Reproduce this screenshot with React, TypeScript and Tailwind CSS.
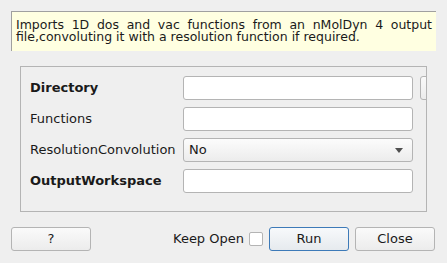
const font = { fontFamily: '"DejaVu Sans", "Liberation Sans", sans-serif' };

function Row({ label, bold, children }: { label: string; bold?: boolean; children: React.ReactNode }) {
  return (
    <div className="flex items-center h-[24px] shrink-0">
      <span className={`w-[153px] shrink-0 text-[13px] text-[#1a1a1a] ${bold ? 'font-bold' : ''}`}>{label}</span>
      {children}
    </div>
  );
}

function TextInput() {
  return <div className="w-[230px] h-[24px] shrink-0 bg-white border border-[#b4b4b4] rounded-[3px]" />;
}

export default function App() {
  return (
    <div style={font} className="w-[447px] h-[263px] bg-[#efefef] flex flex-col overflow-hidden">
      {/* Description */}
      <div className="mt-[11px] ml-[11px] w-[425px] h-[40px] bg-[#ffffe1] border-t border-l border-[#a0a0a0] px-[4px] pt-[7px] text-[12.5px] leading-[12px] text-[#1a1a1a] text-justify [text-align-last:left]">
        Imports 1D dos and vac functions from an nMolDyn 4 output file,convoluting it with a resolution function if required.
      </div>

      {/* Properties group */}
      <div className="mt-[15px] ml-[20px] w-[407px] h-[146px] border border-[#b4b4b4] overflow-hidden pl-[9px] pt-[9px] flex flex-col gap-[7px]">
        <Row label="Directory" bold>
          <TextInput />
          <div className="ml-[7px] w-[20px] h-[24px] shrink-0 bg-gradient-to-b from-[#fafafa] to-[#ececec] border border-[#b4b4b4] rounded-[3px]" />
        </Row>
        <Row label="Functions">
          <TextInput />
        </Row>
        <Row label="ResolutionConvolution">
          <div className="w-[230px] h-[24px] shrink-0 border border-[#b4b4b4] rounded-[3px] bg-gradient-to-b from-[#fcfcfc] to-[#ececec] flex items-center justify-between pl-[5px] pr-[9px] text-[13px] text-[#1a1a1a]">
            <span>No</span>
            <svg width="8" height="5" viewBox="0 0 8 5">
              <path d="M0 0 H8 L4 5 Z" fill="#505050" />
            </svg>
          </div>
        </Row>
        <Row label="OutputWorkspace" bold>
          <TextInput />
        </Row>
      </div>

      {/* Buttons */}
      <div className="mt-[15px] flex items-center h-[24px] text-[13px] text-[#1a1a1a]">
        <button className="ml-[11px] w-[80px] h-[24px] border border-[#b4b4b4] rounded-[3px] bg-gradient-to-b from-[#fafafa] to-[#ececec]">?</button>
        <span className="ml-[82px]">Keep Open</span>
        <div className="ml-[5px] w-[14px] h-[14px] bg-white border border-[#b4b4b4] rounded-[2px]" />
        <button className="ml-[6px] w-[80px] h-[24px] border border-[#3d7ab8] rounded-[3px] bg-gradient-to-b from-[#f7f9fb] to-[#e6eaee]">Run</button>
        <button className="ml-[6px] w-[80px] h-[24px] border border-[#b4b4b4] rounded-[3px] bg-gradient-to-b from-[#fafafa] to-[#ececec]">Close</button>
      </div>
    </div>
  );
}
